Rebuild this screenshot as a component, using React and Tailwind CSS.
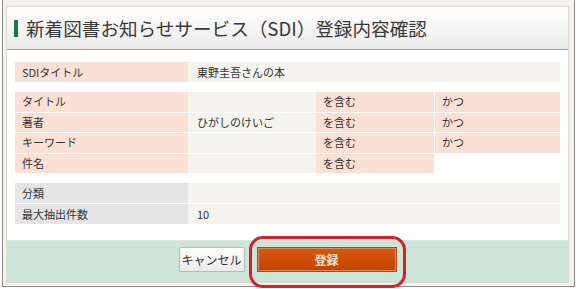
import React from "react";

const font = { fontFamily: '"Noto Sans CJK JP", "Noto Sans", sans-serif' };

const conditions = [
  { label: "タイトル", value: "", op: "を含む", join: "かつ" },
  { label: "著者", value: "ひがしのけいご", op: "を含む", join: "かつ" },
  { label: "キーワード", value: "", op: "を含む", join: "かつ" },
  { label: "件名", value: "", op: "を含む", join: "" },
];

export default function App() {
  return (
    <div className="relative w-[577px] h-[289px] bg-white text-[#333]" style={font}>
      <div className="ml-[2px] w-[573px] h-[287px] border-x border-b border-[#8c8c8c] bg-[#f4f2eb] pl-[3px] pt-[6px]">
        <div className="w-[563px] h-[277px] border border-[#dcd9cf] bg-white flex flex-col">
          {/* header */}
          <div className="h-[43px] flex items-center border-b border-[#7db59b] bg-gradient-to-b from-white to-[#ebebeb]">
            <span className="ml-[7px] w-[4px] h-[17px] bg-[#1b7a47]" />
            <h1 className="ml-[8px] text-[18.6px] leading-none text-[#3a3a3a]">新着図書お知らせサービス（SDI）登録内容確認</h1>
          </div>

          {/* body */}
          <div className="flex-1 px-[8px] pt-[12px] text-[11px] leading-none">
            <div className="flex h-5">
              <div className="w-[173px] bg-[#fae0d5] pl-[7px] flex items-center">SDIタイトル</div>
              <div className="flex-1 bg-[#f4f3ee] pl-[9px] flex items-center">東野圭吾さんの本</div>
            </div>

            <div className="mt-[10px] flex flex-col gap-px">
              {conditions.map((c) => (
                <div key={c.label} className="flex h-[19.5px]">
                  <div className="w-[173px] bg-[#fae0d5] pl-[7px] flex items-center">{c.label}</div>
                  <div className="w-[128px] bg-[#f4f3ee] pl-[9px] flex items-center">{c.value}</div>
                  <div className="w-[118px] bg-[#fae0d5] pl-[7px] flex items-center">{c.op}</div>
                  <div className={`ml-px w-[125px] pl-[7px] flex items-center ${c.join ? "bg-[#fae0d5]" : "bg-white"}`}>{c.join}</div>
                </div>
              ))}
            </div>

            <div className="mt-[10px] flex flex-col gap-px">
              <div className="flex h-5">
                <div className="w-[173px] bg-[#e5e5e5] pl-[7px] flex items-center">分類</div>
                <div className="flex-1 bg-[#f4f3ee] pl-[9px] flex items-center"></div>
              </div>
              <div className="flex h-5">
                <div className="w-[173px] bg-[#e5e5e5] pl-[7px] flex items-center">最大抽出件数</div>
                <div className="flex-1 bg-[#f4f3ee] pl-[9px] flex items-center">10</div>
              </div>
            </div>
          </div>

          {/* footer */}
          <div className="h-[42px] bg-[#cde5d9] border-t border-[#d6e8de] flex justify-center items-start pt-[6px] gap-[12px]">
            <button className="h-[25px] w-[66px] border border-[#b9b9b9] bg-gradient-to-b from-white to-[#e9e9e9] text-[12px] text-[#333] rounded-[2px]">
              キャンセル
            </button>
            <button className="h-[25px] w-[140px] border border-[#a84a1c] bg-gradient-to-b from-[#d85a0e] to-[#c24200] text-[12px] font-bold text-[#fbe6cc] shadow-[inset_0_0_0_1px_#de8a5a]">
              登録
            </button>
          </div>
        </div>
      </div>

      {/* highlight annotation */}
      <div className="absolute left-[249px] top-[236px] w-[157px] h-[52px] border-[3px] border-[#d7202a] rounded-[14px] pointer-events-none" />
    </div>
  );
}
